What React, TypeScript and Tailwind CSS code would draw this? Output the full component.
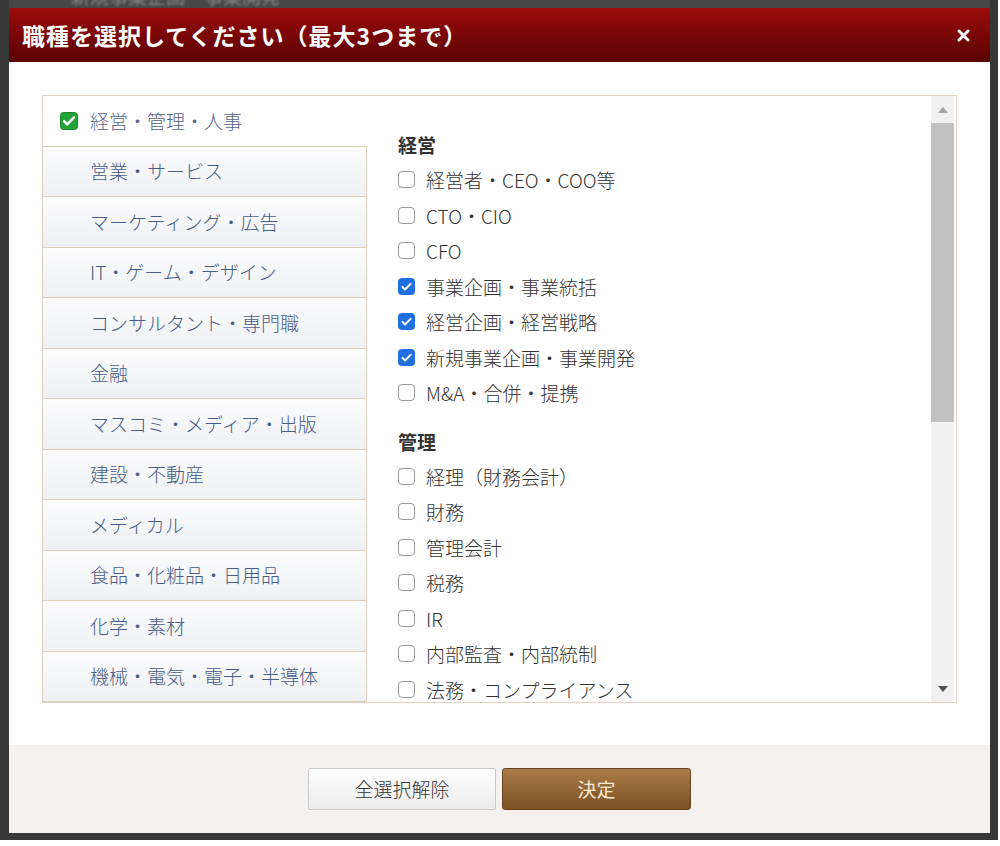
import React from "react";

const categories = [
  "経営・管理・人事",
  "営業・サービス",
  "マーケティング・広告",
  "IT・ゲーム・デザイン",
  "コンサルタント・専門職",
  "金融",
  "マスコミ・メディア・出版",
  "建設・不動産",
  "メディカル",
  "食品・化粧品・日用品",
  "化学・素材",
  "機械・電気・電子・半導体",
];

const groups: { title: string; items: { label: string; checked?: boolean }[] }[] = [
  {
    title: "経営",
    items: [
      { label: "経営者・CEO・COO等" },
      { label: "CTO・CIO" },
      { label: "CFO" },
      { label: "事業企画・事業統括", checked: true },
      { label: "経営企画・経営戦略", checked: true },
      { label: "新規事業企画・事業開発", checked: true },
      { label: "M&A・合併・提携" },
    ],
  },
  {
    title: "管理",
    items: [
      { label: "経理（財務会計）" },
      { label: "財務" },
      { label: "管理会計" },
      { label: "税務" },
      { label: "IR" },
      { label: "内部監査・内部統制" },
      { label: "法務・コンプライアンス" },
    ],
  },
];

function Box({ checked }: { checked?: boolean }) {
  if (checked) {
    return (
      <span className="flex h-[17px] w-[17px] shrink-0 items-center justify-center rounded-[4px] bg-[#2170e0]">
        <svg width="13" height="13" viewBox="0 0 16 16">
          <path d="M3 8.5l3.2 3.2L13 4.8" fill="none" stroke="#fff" strokeWidth="2.4" strokeLinecap="round" strokeLinejoin="round" />
        </svg>
      </span>
    );
  }
  return <span className="h-[17px] w-[17px] shrink-0 rounded-[4px] border-[1.5px] border-[#9a9a9a] bg-white" />;
}

function GreenCheck() {
  return (
    <svg width="18" height="18" viewBox="0 0 18 18" className="shrink-0">
      <rect x="0.5" y="0.5" width="17" height="17" rx="3" fill="#23a23a" stroke="#1a8a2e" />
      <path d="M4 9.2l3.2 3.2L14 5.4" fill="none" stroke="#fff" strokeWidth="2.6" strokeLinecap="round" strokeLinejoin="round" />
    </svg>
  );
}

export default function App() {
  return (
    <div
      className="h-[846px] w-[1000px] bg-white"
      style={{ fontFamily: '"Noto Sans CJK JP", "Noto Sans", sans-serif' }}
    >
      <div className="flex h-[840px] w-[998px] flex-col bg-[#383838] pb-[7px] pl-[9px] pr-[8px]">
        <div className="h-[8px] overflow-hidden bg-[#474747]">
          <div className="-mt-[15px] pl-[62px] text-[19px] leading-[22px] text-[#8a8a8a] blur-[1px]">
            新規事業企画・事業開発
          </div>
        </div>
        <div className="flex h-[54px] items-center justify-between bg-gradient-to-b from-[#9d0c0c] to-[#590303] pl-[13px] pr-[20px]">
          <span className="text-[23px] font-bold tracking-[1px] text-white">
            職種を選択してください（最大3つまで）
          </span>
          <svg width="13" height="13" viewBox="0 0 13 13">
            <path d="M2 2l9 9M11 2l-9 9" stroke="#fff" strokeWidth="3" strokeLinecap="round" />
          </svg>
        </div>
        <div className="flex-1 bg-white px-[33px] pt-[33px]">
          <div className="flex h-[608px] border border-[#ddd2c3]">
            <div className="flex w-[324px] shrink-0 flex-col">
              {categories.map((c, i) =>
                i === 0 ? (
                  <div
                    key={c}
                    className="flex h-[50.5px] shrink-0 items-center gap-[12px] border-b border-[#ddd0bd] bg-white pl-[17px] text-[19px] font-light text-[#55658a]"
                  >
                    <GreenCheck />
                    <span>{c}</span>
                  </div>
                ) : (
                  <div
                    key={c}
                    className="flex h-[50.5px] shrink-0 items-center border-b border-r border-[#ddd0bd] bg-gradient-to-b from-[#fcfcfd] to-[#eef0f3] pl-[47px] text-[19px] font-light text-[#485d86]"
                  >
                    {c}
                  </div>
                )
              )}
            </div>
            <div className="flex-1 overflow-hidden pl-[31px] pt-[38px]">
              {groups.map((g, gi) => (
                <div key={g.title} className={gi > 0 ? "mt-[20px]" : ""}>
                  <div className="mb-[6px] h-[22px] text-[19px] font-bold leading-[22px] text-[#333]">{g.title}</div>
                  {g.items.map((it) => (
                    <div key={it.label} className="flex h-[35.5px] items-center gap-[11px] text-[19px] font-light text-[#333]">
                      <Box checked={it.checked} />
                      <span className="leading-none">{it.label}</span>
                    </div>
                  ))}
                </div>
              ))}
            </div>
            <div className="mr-[2px] flex w-[23px] shrink-0 flex-col bg-[#f1f1f1]">
              <div className="flex h-[27px] items-center justify-center">
                <svg width="10" height="6" viewBox="0 0 10 6">
                  <path d="M0 6L5 0l5 6z" fill="#a3a3a3" />
                </svg>
              </div>
              <div className="h-[299px] bg-[#c1c1c1]" />
              <div className="flex-1" />
              <div className="flex h-[27px] items-center justify-center">
                <svg width="10" height="6" viewBox="0 0 10 6">
                  <path d="M0 0h10L5 6z" fill="#505050" />
                </svg>
              </div>
            </div>
          </div>
        </div>
        <div className="flex h-[88px] items-start justify-center gap-[6px] bg-[#f4f1ee] pt-[23px]">
          <button className="h-[42px] w-[188px] rounded-[2px] border border-[#c9c9c9] bg-gradient-to-b from-[#ffffff] to-[#ebebeb] text-[19px] font-light text-[#333]">
            全選択解除
          </button>
          <button className="h-[42px] w-[189px] rounded-[3px] border border-[#6a4420] bg-gradient-to-b from-[#aa7d48] to-[#7a5124] text-[19px] text-[#f8ecd2]">
            決定
          </button>
        </div>
      </div>
    </div>
  );
}
